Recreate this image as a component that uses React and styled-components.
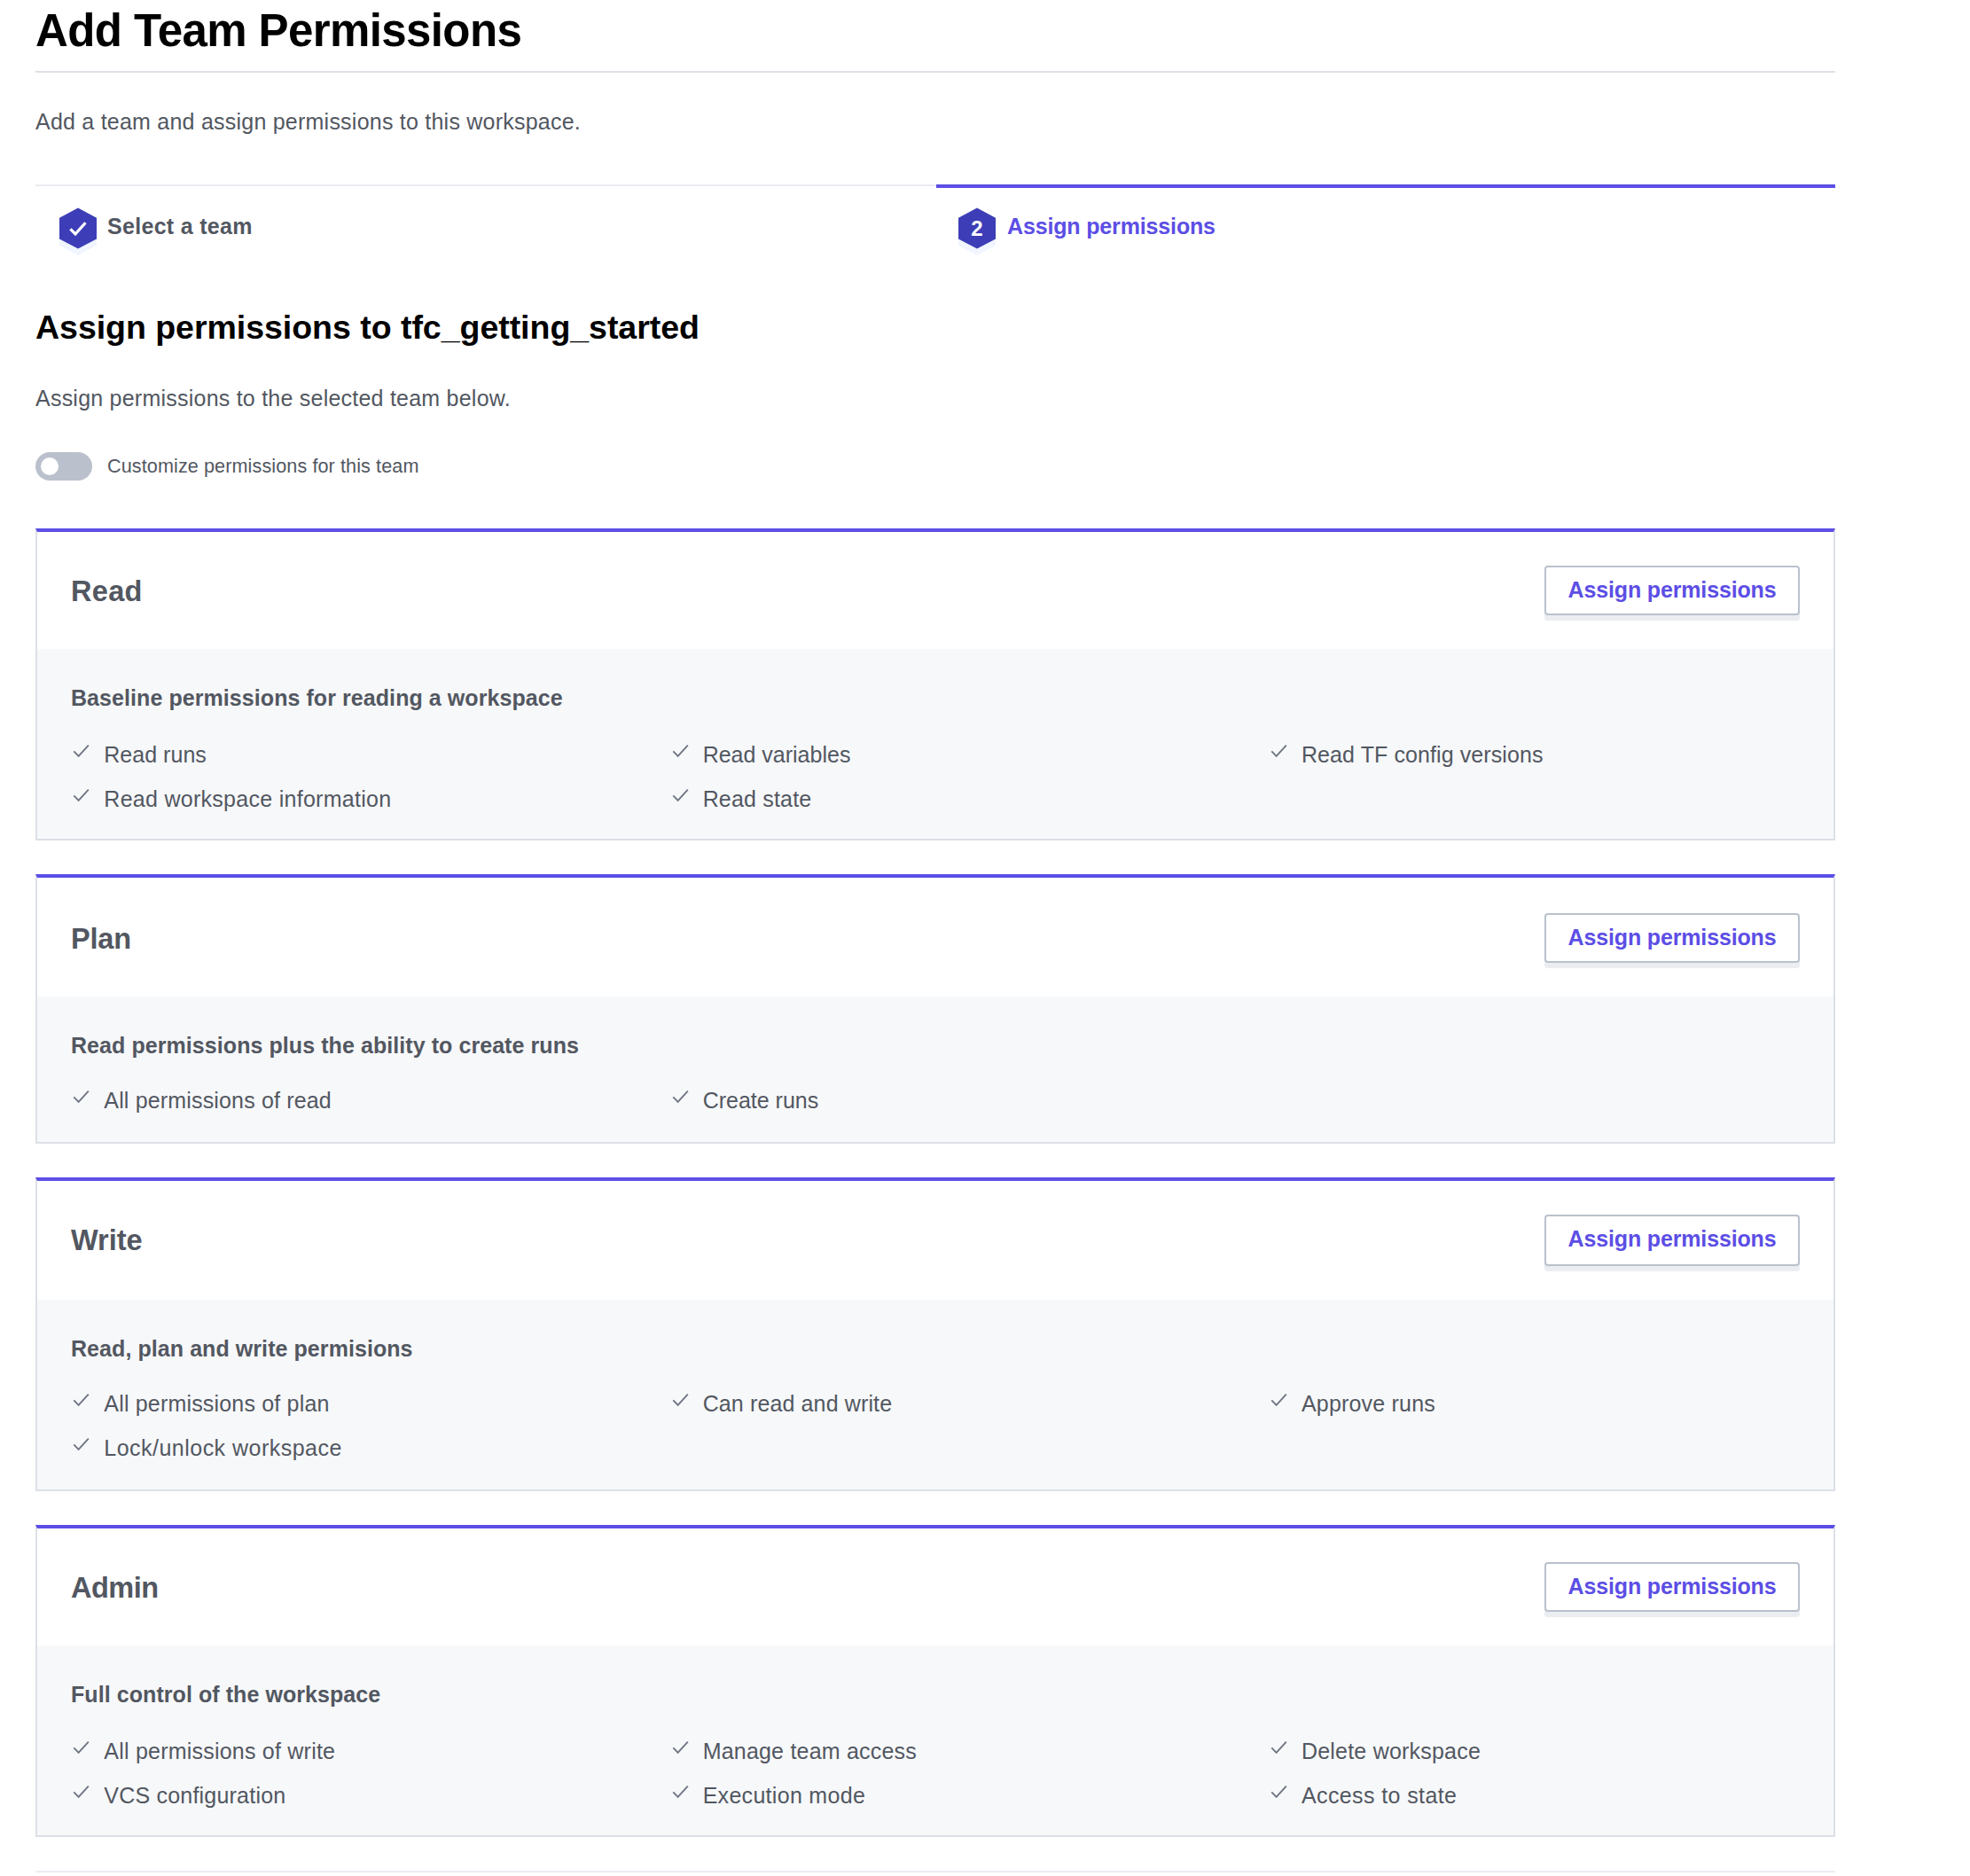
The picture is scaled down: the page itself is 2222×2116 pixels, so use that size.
import React from "react";
import styled, { createGlobalStyle } from "styled-components";

const Global = createGlobalStyle`
  *, *::before, *::after { box-sizing: border-box; }
  body { margin: 0; background: #fff; }
  h1, h2, h3, h4, p, ul { margin: 0; padding: 0; }
`;

const Page = styled.main`
  width: 2070px;
  height: 2116px;
  padding-left: 40px;
  overflow: hidden;
  display: flex;
  flex-direction: column;
  font-family: "Liberation Sans", Arial, sans-serif;
  font-size: 25px;
  line-height: 30px;
  color: #525761;
`;

const PageHeader = styled.header`
  height: 82px;
  padding-top: 5px;
  border-bottom: 2px solid #dce0e6;
`;

const PageTitle = styled.h1`
  font-size: 51px;
  line-height: 60px;
  letter-spacing: -0.6px;
  color: #000;
`;

const Text = styled.p`
  height: 30px;
  margin-top: ${(p) => p.$top}px;
  letter-spacing: 0.23px;
`;

const Steps = styled.nav`
  display: grid;
  grid-template-columns: 1016px 1014px;
  height: 104px;
  margin-top: 56px;
`;

const Step = styled.div`
  display: flex;
  align-items: flex-start;
  gap: ${(p) => (p.$active ? 13 : 12.5)}px;
  padding: ${(p) => (p.$active ? "22px 0 0 25px" : "24px 0 0 26.5px")};
  border-top: ${(p) => (p.$active ? "4px solid #5c4ee5" : "2px solid #e9edf2")};
  color: ${(p) => (p.$active ? "#5c4ee5" : "#525761")};
  font-weight: 700;
`;

const StepLabel = styled.span`
  padding-top: 6px;
  letter-spacing: ${(p) => p.$tracking}px;
`;

const HexIcon = styled.svg`
  display: block;
  width: 42px;
  height: 55px;
  flex: none;
`;

const SectionTitle = styled.h2`
  height: 44px;
  margin-top: 35px;
  font-size: 37.5px;
  line-height: 44px;
  letter-spacing: -0.03px;
  color: #000;
`;

const ToggleRow = styled.label`
  display: flex;
  align-items: center;
  gap: 17px;
  height: 32px;
  margin-top: 46px;
  font-size: 21.6px;
  letter-spacing: 0.1px;
`;

const Toggle = styled.span`
  display: flex;
  align-items: center;
  width: 64px;
  height: 32px;
  padding: 6px;
  border-radius: 16px;
  background: #bac1cc;
`;

const Knob = styled.span`
  width: 20px;
  height: 20px;
  border-radius: 50%;
  background: #fff;
`;

const Cards = styled.div`
  display: flex;
  flex-direction: column;
  gap: 38px;
  margin-top: 54px;
`;

const Card = styled.section`
  border: 2px solid #dce0e6;
  border-top: 4px solid #5c4ee5;
`;

const CardHeader = styled.div`
  display: flex;
  justify-content: space-between;
  align-items: flex-start;
  height: ${(p) => p.$height}px;
  padding: 38px 38px 0;
`;

const CardTitle = styled.h3`
  padding-top: ${(p) => p.$top}px;
  font-size: 32.5px;
  line-height: 38px;
  letter-spacing: ${(p) => p.$tracking}px;
`;

const AssignButton = styled.button`
  width: 288px;
  height: ${(p) => p.$height}px;
  margin-top: ${(p) => p.$top}px;
  padding: 0 0 ${(p) => p.$height - 54}px;
  border: 2px solid #bac1cc;
  border-radius: 4px;
  background: #fff;
  box-shadow: 0 6px 1px -0.5px #ebedf0;
  color: #5c4ee5;
  font: 700 25px/30px "Liberation Sans", Arial, sans-serif;
  letter-spacing: -0.15px;
  white-space: nowrap;
`;

const CardBody = styled.div`
  height: ${(p) => p.$height}px;
  padding-top: 40px;
  background: #f7f8fa;
`;

const Summary = styled.h4`
  padding-left: 38px;
  font-size: 25px;
  line-height: 30px;
  letter-spacing: 0.07px;
`;

const PermissionList = styled.ul`
  display: grid;
  grid-template-columns: repeat(3, 1fr);
  grid-auto-rows: 50px;
  padding-top: ${(p) => p.$top}px;
  list-style: none;
`;

const Permission = styled.li`
  display: flex;
  align-items: flex-start;
  gap: 16px;
  padding-left: 40.3px;
  letter-spacing: ${(p) => p.$tracking}px;
`;

const CheckIcon = styled.svg`
  display: block;
  width: 19px;
  height: 16px;
  margin-top: 3px;
  flex: none;
`;

const Footer = styled.footer`
  height: 2px;
  flex: none;
  margin-top: 38px;
  background: #ebeef2;
`;

const levels = [
  {
    title: "Read",
    titleTracking: 0.3,
    summary: "Baseline permissions for reading a workspace",
    items: [
      ["Read runs", 0.02],
      ["Read variables", 0],
      ["Read TF config versions", 0.09],
      ["Read workspace information", 0.28],
      ["Read state", 0.18],
    ],
    header: 132,
    body: 214,
    listTop: 34,
  },
  {
    title: "Plan",
    titleTracking: -0.2,
    summary: "Read permissions plus the ability to create runs",
    items: [
      ["All permissions of read", 0.16],
      ["Create runs", 0],
    ],
    header: 134,
    titleTop: 12,
    buttonTop: 2,
    body: 164,
    listTop: 32,
  },
  {
    title: "Write",
    summary: "Read, plan and write permisions",
    items: [
      ["All permissions of plan", 0.18],
      ["Can read and write", 0.13],
      ["Approve runs", 0.19],
      ["Lock/unlock workspace", 0.48],
    ],
    header: 134,
    buttonHeight: 58,
    body: 214,
    listTop: 32,
  },
  {
    title: "Admin",
    titleTracking: -0.5,
    summary: "Full control of the workspace",
    items: [
      ["All permissions of write", 0.22],
      ["Manage team access", 0.21],
      ["Delete workspace", 0.21],
      ["VCS configuration", 0.21],
      ["Execution mode", 0.3],
      ["Access to state", 0.39],
    ],
    header: 132,
    body: 214,
    listTop: 34,
  },
];

function Hexagon({ children }) {
  const points = "21,0.6 42,11.7 42,35.4 21,46.6 0,35.4 0,11.7";
  return (
    <HexIcon viewBox="0 0 42 55">
      <polygon points={points} fill="#f0f5ff" transform="translate(0 7.3)" />
      <polygon points={points} fill="#3d3eb7" />
      {children}
    </HexIcon>
  );
}

function Check() {
  return (
    <CheckIcon viewBox="0 0 19 16">
      <path d="M1.3 8.4L6.6 13.8L17.8 1.6" fill="none" stroke="#6f7682" strokeWidth="1.9" />
    </CheckIcon>
  );
}

function PermissionCard({ level }) {
  return (
    <Card>
      <CardHeader $height={level.header}>
        <CardTitle $top={level.titleTop ?? 10} $tracking={level.titleTracking ?? 0}>
          {level.title}
        </CardTitle>
        <AssignButton $top={level.buttonTop ?? 0} $height={level.buttonHeight ?? 56}>
          Assign permissions
        </AssignButton>
      </CardHeader>
      <CardBody $height={level.body}>
        <Summary>{level.summary}</Summary>
        <PermissionList $top={level.listTop}>
          {level.items.map(([label, tracking]) => (
            <Permission key={label} $tracking={tracking}>
              <Check />
              <span>{label}</span>
            </Permission>
          ))}
        </PermissionList>
      </CardBody>
    </Card>
  );
}

export default function App() {
  return (
    <>
      <Global />
      <Page>
        <PageHeader>
          <PageTitle>Add Team Permissions</PageTitle>
        </PageHeader>
        <Text $top={40}>Add a team and assign permissions to this workspace.</Text>
        <Steps>
          <Step>
            <Hexagon>
              <path d="M12.4 24.4L18 30L29.4 17.2" fill="none" stroke="#fff" strokeWidth="3.2" />
            </Hexagon>
            <StepLabel $tracking={0.3}>Select a team</StepLabel>
          </Step>
          <Step $active>
            <Hexagon>
              <text x="21" y="32" textAnchor="middle" fontSize="24" fontWeight="700" fill="#fff">
                2
              </text>
            </Hexagon>
            <StepLabel $tracking={-0.15}>Assign permissions</StepLabel>
          </Step>
        </Steps>
        <SectionTitle>Assign permissions to tfc_getting_started</SectionTitle>
        <Text $top={43}>Assign permissions to the selected team below.</Text>
        <ToggleRow>
          <Toggle>
            <Knob />
          </Toggle>
          Customize permissions for this team
        </ToggleRow>
        <Cards>
          {levels.map((level) => (
            <PermissionCard key={level.title} level={level} />
          ))}
        </Cards>
        <Footer />
      </Page>
    </>
  );
}
